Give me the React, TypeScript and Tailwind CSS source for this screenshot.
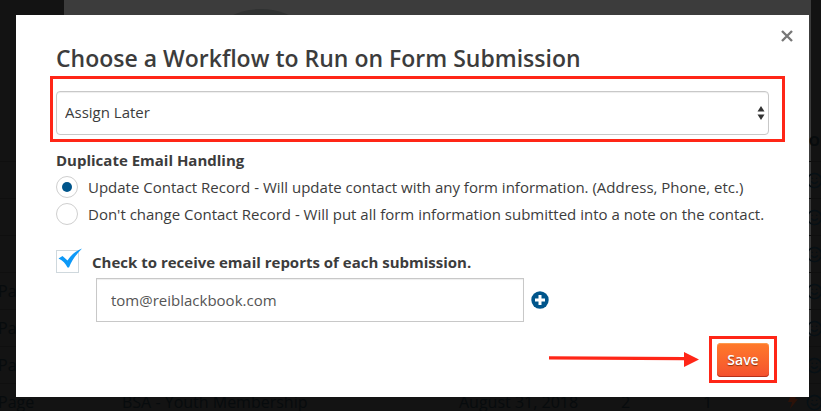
import React, { useState } from 'react';
import { Smile } from 'lucide-react';

const rows = [
  { type: '' },
  { type: '' },
  { type: '' },
  { type: 'Page' },
  { type: 'Page' },
  { type: 'Page' },
  { type: 'Page', name: 'BSA - Youth Membership', date: 'August 31, 2018', views: 2, leads: 1 },
];

const PageBehind: React.FC = () => (
  <div aria-hidden="true" className="absolute inset-0 flex flex-col justify-end overflow-hidden bg-[#131313] text-base text-[#070b0d]">
    <div className="absolute inset-x-0 top-0 mr-[10px] ml-16 h-[337px] overflow-hidden rounded-b bg-[#3c3c3c] pt-[9px] pl-[130px]">
      <div className="size-[134px] rounded-full bg-[#303232]" />
    </div>
    <div className="relative -mb-[9px] -ml-[2px]">
      <div className="flex h-[30px] justify-end">
        <span className="-mr-[18px] text-sm font-bold">IONS</span>
      </div>
      {rows.map((row, i) => (
        <div key={i} className="grid h-[37px] grid-cols-[124px_337px_162px_82px_85px_1fr] items-center border-t border-[#0f0f0f] whitespace-nowrap">
          <span>{row.type}</span>
          <span>{row.name}</span>
          <span>{row.date}</span>
          <span>{row.views}</span>
          <span>{row.leads}</span>
          <div className="flex items-center gap-2">
            <svg viewBox="0 0 10 14" className="h-[14px] w-[10px] shrink-0 fill-[#2c1209]">
              <path d="M3 0h6L7 4h3L2 14l2-7H0z" />
            </svg>
            <Smile size={17} className="shrink-0 text-[#071015]" />
          </div>
        </div>
      ))}
    </div>
  </div>
);

interface RadioOptionProps {
  value: string;
  label: string;
  selected: string;
  onSelect: (value: string) => void;
}

const RadioOption: React.FC<RadioOptionProps> = ({ value, label, selected, onSelect }) => (
  <label className="flex items-center gap-[10px] whitespace-nowrap">
    <input
      type="radio"
      name="duplicates"
      value={value}
      checked={selected === value}
      onChange={() => onSelect(value)}
      className="grid size-[22px] shrink-0 appearance-none place-items-center rounded-full border border-[#cfcfcf] before:size-[10px] before:rounded-full checked:before:bg-[#00558b]"
    />
    {label}
  </label>
);

const App: React.FC = () => {
  const [workflow, setWorkflow] = useState('later');
  const [duplicates, setDuplicates] = useState('update');
  const [sendReports, setSendReports] = useState(true);
  const [email, setEmail] = useState('tom@reiblackbook.com');

  return (
    <div className="relative min-h-screen overflow-hidden pt-[15px] pr-3 pb-[14px] pl-4 font-['Open_Sans',sans-serif] text-[15px] leading-[22px] text-[#3c3c3c]">
      <PageBehind />

      <form
        role="dialog"
        aria-labelledby="title"
        onSubmit={(e) => e.preventDefault()}
        className="relative flex flex-col bg-white px-10 pt-[15px] pb-5"
      >
        <button type="button" aria-label="Close" className="-mr-6 size-3 self-end text-[#777]">
          <svg viewBox="0 0 12 12" className="size-3 stroke-current stroke-[2.4]">
            <path d="M1 1l10 10M11 1L1 11" />
          </svg>
        </button>

        <h1 id="title" className="mb-[17px] text-[23px] leading-8 font-semibold">Choose a Workflow to Run on Form Submission</h1>

        <div className="relative">
          <select
            aria-label="Workflow"
            value={workflow}
            onChange={(e) => setWorkflow(e.target.value)}
            className="block h-11 w-full appearance-none rounded border border-[#c8c8c8] bg-white px-2 pb-[2px] shadow-[inset_0_1px_1px_#eee]"
          >
            <option value="later">Assign Later</option>
          </select>
          <div className="pointer-events-none absolute inset-0 flex items-center justify-end pr-1">
            <svg viewBox="0 0 8 14" className="h-[14px] w-2 fill-[#333]">
              <path d="M4 0l3.500 5.500h-7zM4 14L.5 8.500h7z" />
            </svg>
          </div>
          <div className="pointer-events-none absolute -top-[15px] -right-4 -bottom-[7px] -left-[6px] border-3 border-[#ff2617]" />
        </div>

        <fieldset className="mt-[14px]">
          <legend className="font-bold">Duplicate Email Handling</legend>
          <div className="mt-[5px] flex flex-col gap-[5px]">
            <RadioOption
              value="update"
              label="Update Contact Record - Will update contact with any form information. (Address, Phone, etc.)"
              selected={duplicates}
              onSelect={setDuplicates}
            />
            <RadioOption
              value="keep"
              label="Don't change Contact Record - Will put all form information submitted into a note on the contact."
              selected={duplicates}
              onSelect={setDuplicates}
            />
          </div>
        </fieldset>

        <label className="relative mt-[25px] flex items-center gap-[13px] font-bold">
          <input
            type="checkbox"
            checked={sendReports}
            onChange={(e) => setSendReports(e.target.checked)}
            className="size-[23px] shrink-0 appearance-none border border-[#cfd8dd]"
          />
          {sendReports && (
            <svg viewBox="0 0 24 20" className="pointer-events-none absolute -top-[2px] left-[2px] h-5 w-6 fill-[#0d99f7]">
              <path d="M.5 10.500L4.500 8l5 4.500C13 7 17.500 3 24 .5 18.500 6 14 12 11 19.500H9.500C7.500 15.500 5 12.500 .5 10.500z" />
            </svg>
          )}
          Check to receive email reports of each submission.
        </label>

        <div className="mt-[5px] ml-10 flex items-center gap-[7px]">
          <input
            type="email"
            aria-label="Report email"
            value={email}
            onChange={(e) => setEmail(e.target.value)}
            className="h-11 w-[428px] border border-[#c8c8c8] px-[14px] text-[#555] shadow-[inset_0_1px_1px_#eee]"
          />
          <button type="button" aria-label="Add email">
            <svg viewBox="0 0 18 18" className="size-[18px]">
              <circle cx="9" cy="9" r="8.700" fill="#00558b" />
              <path d="M9 4v10M4 9h10" stroke="#fff" strokeWidth="3" />
            </svg>
          </button>
        </div>

        <div className="mt-[21px] flex items-center justify-end gap-[18px]">
          <svg viewBox="0 0 150 16" className="h-4 w-[150px] fill-[#ff2617]">
            <path d="M0 4.200l135 .9V0l15 7.500-15 7.500V8.300L0 7.400z" />
          </svg>
          <div className="relative">
            <button
              type="submit"
              className="block h-[34px] w-[52px] rounded bg-linear-to-b from-[#ff7a2b] to-[#f4502e] text-sm font-semibold text-white shadow-[inset_0_1px_0_#ff9a4d,inset_0_-1px_0_#b5301a] text-shadow-[0_1px_1px_#8a3010]"
            >
              Save
            </button>
            <div className="pointer-events-none absolute -inset-x-2 -top-[7px] -bottom-[6px] border-3 border-[#ff2617]" />
          </div>
        </div>
      </form>
    </div>
  );
};

export default App;
